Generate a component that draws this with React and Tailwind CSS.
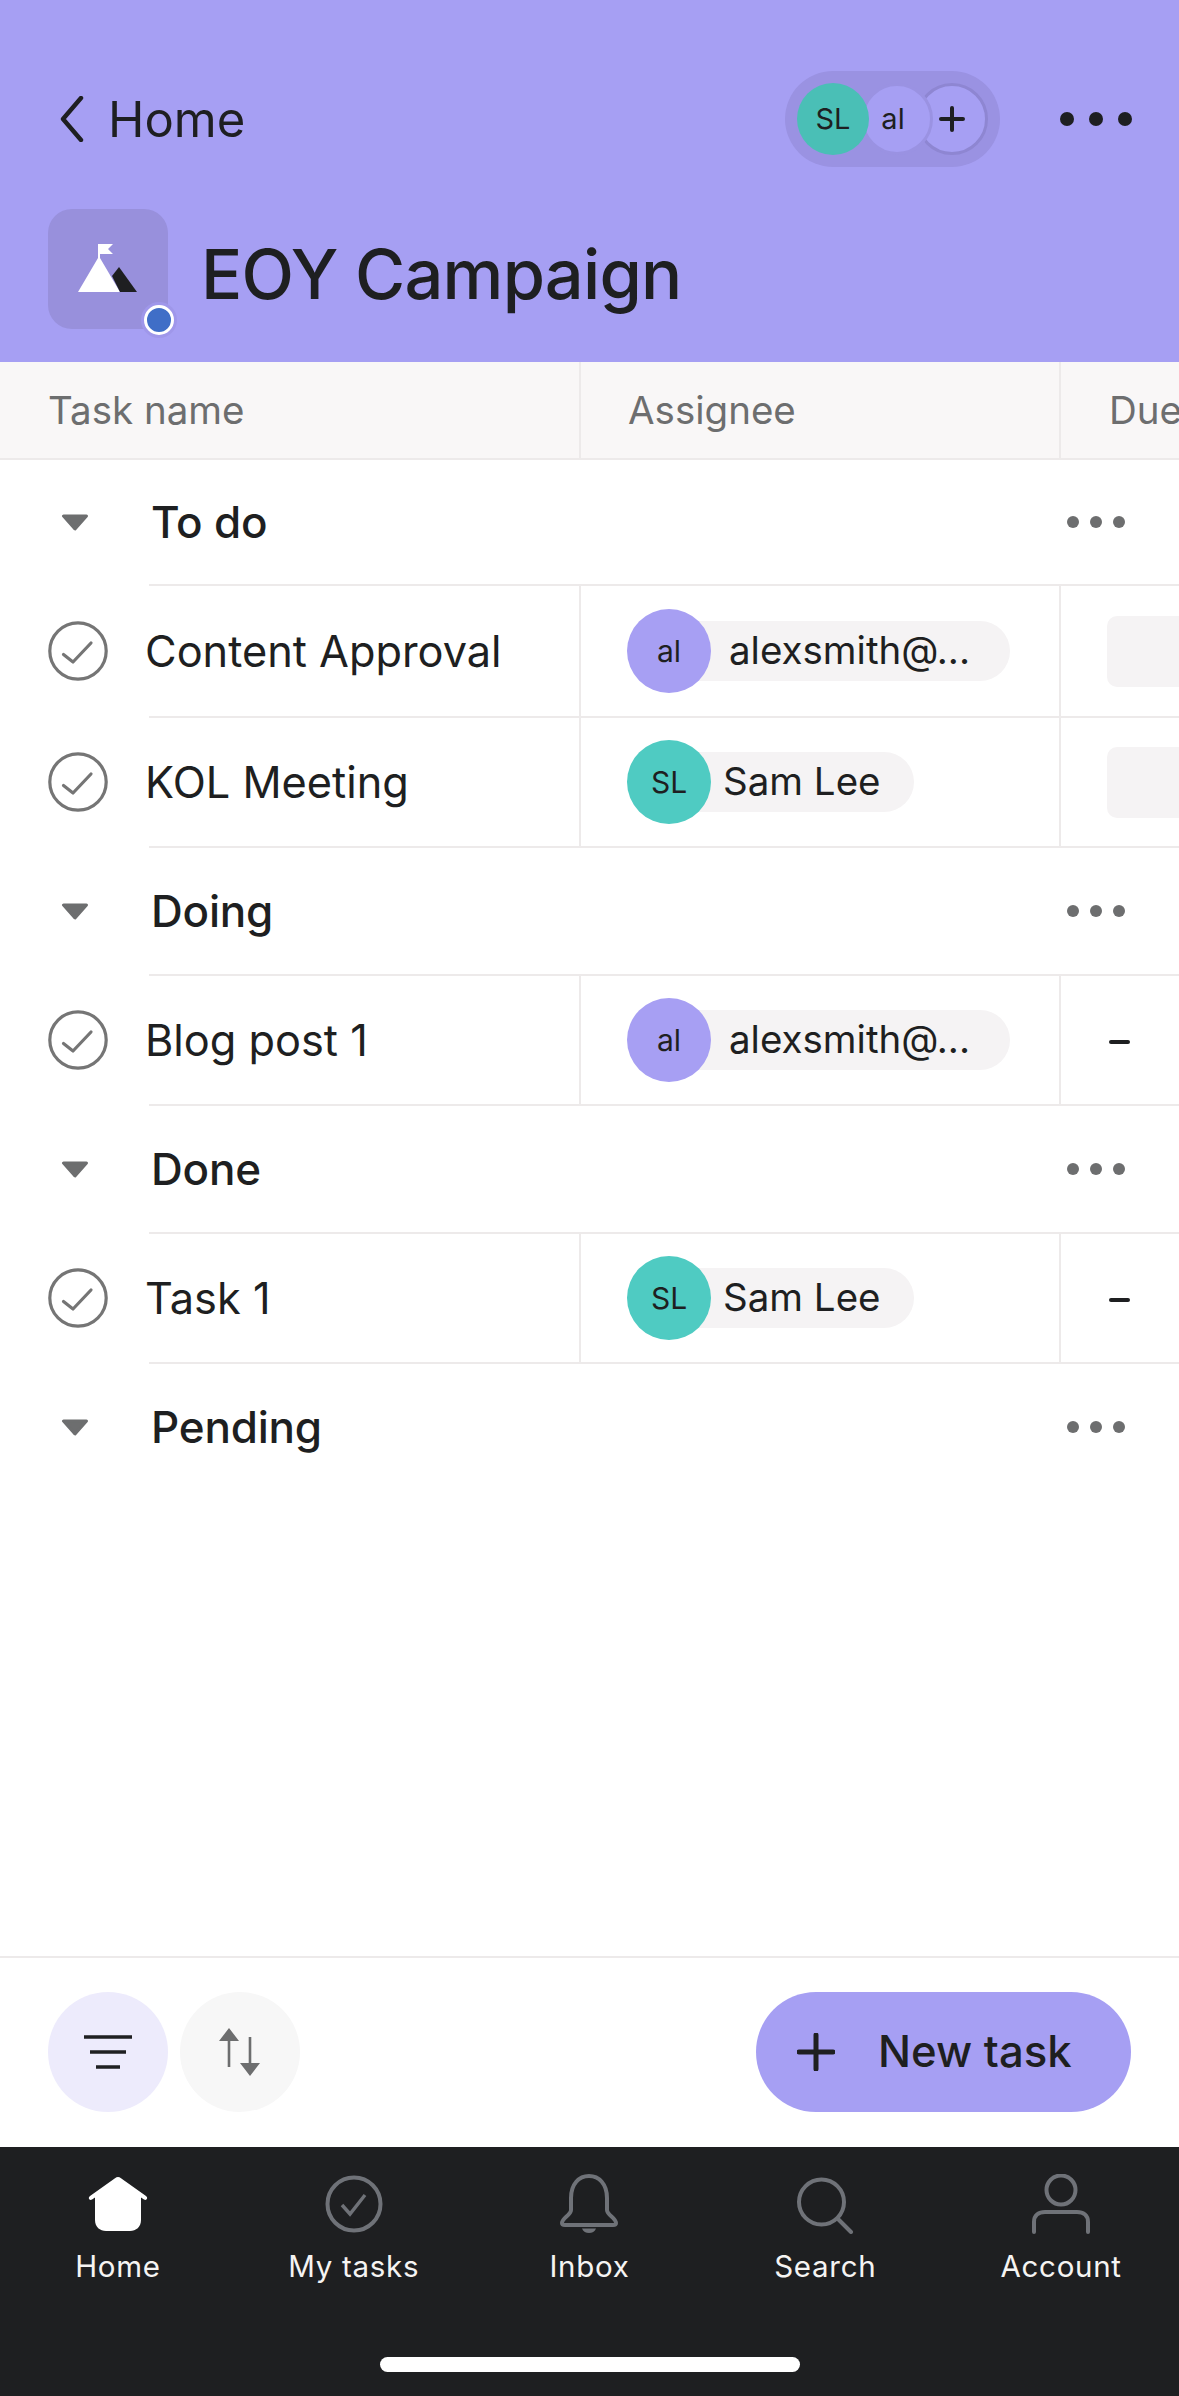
import React from "react";

function Dots({ dark }) {
  return dark ? (
    <div className="flex gap-[15px]">
      <span className="w-[14px] h-[14px] rounded-full bg-[#1e1f21]" />
      <span className="w-[14px] h-[14px] rounded-full bg-[#1e1f21]" />
      <span className="w-[14px] h-[14px] rounded-full bg-[#1e1f21]" />
    </div>
  ) : (
    <div className="flex gap-[11px]">
      <span className="w-[12px] h-[12px] rounded-full bg-[#6d6e6f]" />
      <span className="w-[12px] h-[12px] rounded-full bg-[#6d6e6f]" />
      <span className="w-[12px] h-[12px] rounded-full bg-[#6d6e6f]" />
    </div>
  );
}

function Divider() {
  return <div className="ml-[149px] h-[2px] bg-[#edeaea]" />;
}

function Section({ name, h }) {
  return (
    <div className={`flex items-center ${h}`}>
      <svg width="30" height="17" viewBox="0 0 30 17" className="ml-[60px]">
        <path d="M3.5 2 H26.5 L15 15 Z" fill="#6d6e6f" stroke="#6d6e6f" strokeWidth="3" strokeLinejoin="round" />
      </svg>
      <div className="ml-[61px] text-[44px] font-medium text-[#1e1f21] tracking-[-0.2px]">{name}</div>
      <div className="ml-auto mr-[54px]">
        <Dots />
      </div>
    </div>
  );
}

function Check() {
  return (
    <svg width="60" height="60" viewBox="0 0 60 60">
      <circle cx="30" cy="30" r="28.2" fill="none" stroke="#757575" strokeWidth="3.2" />
      <path d="M15.5 33.5 L25 41 L43 22" fill="none" stroke="#757575" strokeWidth="3.2" strokeLinecap="round" strokeLinejoin="round" />
    </svg>
  );
}

function Assignee({ kind }) {
  const al = kind === "al";
  return (
    <div className="flex items-center h-[84px] relative">
      <div className="absolute left-[40px] h-[60px] rounded-full bg-[#f5f3f4]" style={{ width: al ? 343 : 247 }} />
      <div
        className={`relative w-[84px] h-[84px] rounded-full flex items-center justify-center text-[30px] text-[#1e1f21] ${al ? "bg-[#a79ff3]" : "bg-[#4fcbc2]"}`}
      >
        {al ? "al" : "SL"}
      </div>
      <div className={`relative text-[38.5px] text-[#1e1f21] ${al ? "ml-[18px]" : "ml-[12px]"}`}>
        {al ? "alexsmith@..." : "Sam Lee"}
      </div>
    </div>
  );
}

function Task({ name, who, due, h }) {
  return (
    <div className={`flex ${h}`}>
      <div className="w-[581px] border-r-2 border-[#edeaea] flex items-center pl-[48px] shrink-0">
        <Check />
        <div className="ml-[37px] text-[43.3px] text-[#1e1f21]">{name}</div>
      </div>
      <div className="w-[480px] border-r-2 border-[#edeaea] flex items-center pl-[46px] shrink-0">
        <Assignee kind={who} />
      </div>
      <div className="flex-1 flex items-center pl-[46px]">
        {due ? (
          <div className="w-[120px] h-[71px] rounded-[10px] bg-[#f5f3f4] shrink-0" />
        ) : (
          <div className="ml-[2px] mt-[3px] w-[21px] h-[4px] bg-[#1e1f21] rounded-full shrink-0" />
        )}
      </div>
    </div>
  );
}

function Tab({ label, children }) {
  return (
    <div className="flex flex-col items-center">
      <div className="h-[60px] w-full flex justify-center">{children}</div>
      <div className="mt-[14px] text-[29.5px] leading-[36px] text-[#f5f4f3] tracking-[0.7px]">{label}</div>
    </div>
  );
}

const G = "#6f7278";

export default function App() {
  return (
    <div className="w-[1179px] h-[2396px] bg-white flex flex-col overflow-hidden font-['Inter',sans-serif]">
      {/* Header */}
      <div className="h-[362px] bg-[#a69ff3] px-[48px] pt-[71px] shrink-0">
        <div className="flex items-center h-[96px]">
          <svg width="26" height="46" viewBox="0 0 26 46" className="ml-[11px]">
            <path d="M22 2 L4 23 L22 44" fill="none" stroke="#1e1f21" strokeWidth="4.4" strokeLinecap="round" strokeLinejoin="round" />
          </svg>
          <div className="ml-[23px] pt-[2px] text-[49px] text-[#1e1f21]">Home</div>
          <div className="ml-auto mr-[60px] w-[215px] h-[96px] rounded-full bg-[#9a92e2] flex items-center pl-[12px]">
            <div className="relative z-20 w-[72px] h-[72px] rounded-full bg-[#4abfb6] flex items-center justify-center text-[29px] text-[#1e1f21] shrink-0">
              SL
            </div>
            <div className="relative z-10 -ml-[8px] w-[72px] h-[72px] rounded-full bg-[#a69ff3] border-[3px] border-[#9a92e2] flex items-center justify-center pr-[8px] text-[29px] text-[#1e1f21] shrink-0">
              al
            </div>
            <div className="-ml-[17px] w-[72px] h-[72px] rounded-full bg-[#a69ff3] border-[3px] border-[#8e86d2] flex items-center justify-center shrink-0">
              <svg width="26" height="26" viewBox="0 0 26 26">
                <path d="M13 2 V24 M2 13 H24" stroke="#1e1f21" strokeWidth="4" strokeLinecap="round" />
              </svg>
            </div>
          </div>
          <div className="mr-[-1px]">
            <Dots dark />
          </div>
        </div>
        <div className="mt-[42px] flex items-center">
          <div className="relative w-[120px] h-[120px] rounded-[24px] bg-[#9890dc] shrink-0">
            <svg width="120" height="120" viewBox="0 0 120 120" className="absolute left-0 top-0">
              <path d="M30 83 L50 49 L50 35 L65 35 L60 40 L65 45 L52 45 L52 49 L72 83 Z" fill="#fff" />
              <path d="M64 67 L71 58 L89 83 L72 83 Z" fill="#1e1f21" />
            </svg>
            <div className="absolute left-[93px] top-[93px] w-[36px] h-[36px] rounded-full bg-[#9f97ea] flex items-center justify-center">
              <div className="w-[30px] h-[30px] rounded-full bg-[#3f6ec7] border-[3px] border-white" />
            </div>
          </div>
          <div className="ml-[33px] pt-[13px] text-[68.5px] font-medium text-[#1e1f21] tracking-[-0.8px]">EOY Campaign</div>
        </div>
      </div>

      {/* Column header */}
      <div className="flex h-[98px] bg-[#f9f7f7] border-b-2 border-[#edeaea] shrink-0 text-[38.5px] text-[#6d6e6f]">
        <div className="w-[581px] border-r-2 border-[#edeaea] flex items-center pl-[48px] pt-[2px] shrink-0">Task name</div>
        <div className="w-[480px] border-r-2 border-[#edeaea] flex items-center pl-[47px] pt-[2px] shrink-0">Assignee</div>
        <div className="flex items-center pl-[48px] pt-[2px]">Due</div>
      </div>

      {/* List */}
      <div className="flex-1">
        <Section name="To do" h="h-[124px]" />
        <Divider />
        <Task name="Content Approval" who="al" due h="h-[130px]" />
        <Divider />
        <Task name="KOL Meeting" who="sl" due h="h-[128px]" />
        <Divider />
        <Section name="Doing" h="h-[126px]" />
        <Divider />
        <Task name="Blog post 1" who="al" h="h-[128px]" />
        <Divider />
        <Section name="Done" h="h-[126px]" />
        <Divider />
        <Task name="Task 1" who="sl" h="h-[128px]" />
        <Divider />
        <Section name="Pending" h="h-[126px]" />
      </div>

      {/* Action bar */}
      <div className="h-[191px] border-t-2 border-[#edeaea] flex items-center px-[48px] shrink-0 pb-[2px]">
        <div className="w-[120px] h-[120px] rounded-full bg-[#edebfc] flex items-center justify-center">
          <svg width="50" height="36" viewBox="0 0 50 36">
            <path d="M1 3 H49 M7 18 H43 M13 33 H37" stroke="#1e1f21" strokeWidth="3.4" />
          </svg>
        </div>
        <div className="ml-[12px] w-[120px] h-[120px] rounded-full bg-[#f7f7f7] flex items-center justify-center">
          <svg width="44" height="50" viewBox="0 0 44 50">
            <path d="M11 1 L21 14 H1 Z M32 49 L22 36 H42 Z" fill="#6d6e6f" />
            <path d="M11 12 V40 M32 10 V38" stroke="#6d6e6f" strokeWidth="2.6" />
          </svg>
        </div>
        <div className="ml-auto w-[375px] h-[120px] rounded-full bg-[#a69ff3] flex items-center pl-[41px]">
          <svg width="38" height="38" viewBox="0 0 38 38">
            <path d="M19 2 V36 M2 19 H36" stroke="#1e1f21" strokeWidth="5" strokeLinecap="round" />
          </svg>
          <div className="ml-[43px] text-[43.7px] font-medium text-[#1e1f21]">New task</div>
        </div>
      </div>

      {/* Tab bar */}
      <div className="h-[249px] bg-[#1e1f21] shrink-0 flex flex-col pt-[27px]">
        <div className="grid grid-cols-5">
          <Tab label="Home">
            <svg width="62" height="60" viewBox="0 0 62 60">
              <path
                d="M31 3 C32 3 33 3.5 34 4.2 L59 22 C61.5 24 59.5 27 57 25.5 L54 23.5 V46 C54 53 49 57 43 57 H19 C13 57 8 53 8 46 V23.5 L5 25.5 C2.5 27 0.5 24 3 22 L28 4.2 C29 3.5 30 3 31 3 Z"
                fill="#fff"
              />
            </svg>
          </Tab>
          <Tab label="My tasks">
            <svg width="60" height="60" viewBox="0 0 60 60">
              <circle cx="30" cy="30" r="26.5" fill="none" stroke={G} strokeWidth="4" />
              <path d="M18 31 L26 40 L41 21" fill="none" stroke={G} strokeWidth="3.4" />
            </svg>
          </Tab>
          <Tab label="Inbox">
            <svg width="60" height="60" viewBox="0 0 60 60">
              <path
                d="M12 24 C12 10 20 2 30 2 C40 2 48 10 48 24 V36 C48 41 57 44 57 49 C57 50.5 56 51 54 51 H6 C4 51 3 50.5 3 49 C3 44 12 41 12 36 Z"
                fill="none"
                stroke={G}
                strokeWidth="4"
                strokeLinejoin="round"
              />
              <path d="M23 54.5 H37 C36 57.5 33 59 30 59 C27 59 24 57.5 23 54.5 Z" fill={G} />
            </svg>
          </Tab>
          <Tab label="Search">
            <svg width="60" height="60" viewBox="0 0 60 60">
              <circle cx="26.5" cy="28" r="22.5" fill="none" stroke={G} strokeWidth="4" />
              <path d="M43 45 L56 58" fill="none" stroke={G} strokeWidth="4" strokeLinecap="round" />
            </svg>
          </Tab>
          <Tab label="Account">
            <svg width="60" height="60" viewBox="0 0 60 60">
              <circle cx="30" cy="16" r="14.5" fill="none" stroke={G} strokeWidth="4" />
              <path d="M3 58 V48 C3 41 8 38 14 38 H46 C52 38 57 41 57 48 V58" fill="none" stroke={G} strokeWidth="4" strokeLinecap="round" />
            </svg>
          </Tab>
        </div>
        <div className="mt-auto mb-[24px] mx-auto w-[420px] h-[15px] rounded-full bg-white" />
      </div>
    </div>
  );
}
